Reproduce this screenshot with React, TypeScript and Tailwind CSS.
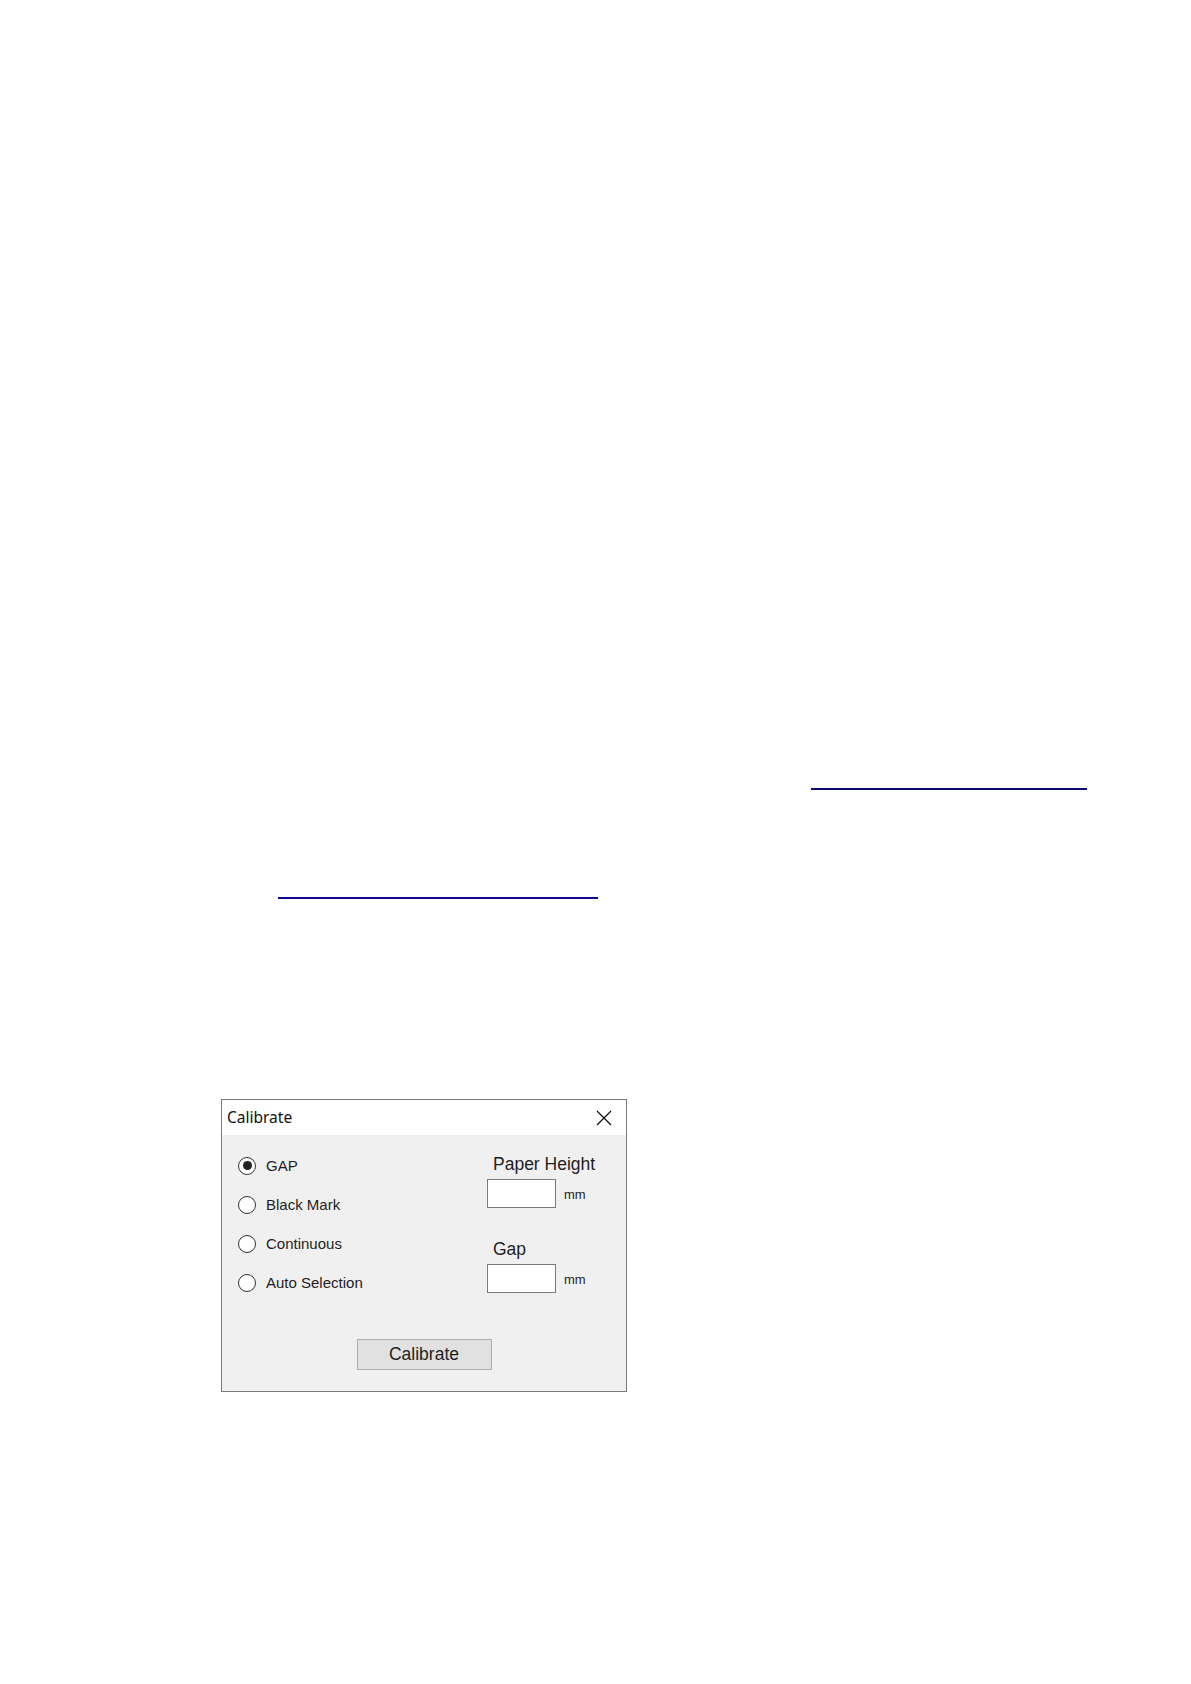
import React from 'react';

const radios = [
    { label: 'GAP', checked: true },
    { label: 'Black Mark', checked: false },
    { label: 'Continuous', checked: false },
    { label: 'Auto Selection', checked: false },
];

function Radio({ label, checked }: { label: string; checked: boolean }) {
    return (
        <div className="flex h-[39px] items-center gap-[10px]">
            <span className="flex h-[18px] w-[18px] items-center justify-center rounded-full border border-[#333333] bg-white">
                {checked && <span className="h-[9px] w-[9px] rounded-full bg-[#222222]" />}
            </span>
            <span className="text-[15px] leading-none text-[#1e1e1e]">{label}</span>
        </div>
    );
}

function Field({ label }: { label: string }) {
    return (
        <div className="flex flex-col">
            <span className="ml-[6px] text-[17.5px] leading-[22px] text-[#1e1e1e]">{label}</span>
            <div className="mt-[4px] flex items-center gap-[8px]">
                <div className="h-[29px] w-[69px] border border-[#7a7a7a] bg-white" />
                <span className="mt-[3px] text-[13px] text-[#1e1e1e]">mm</span>
            </div>
        </div>
    );
}

export default function App() {
    return (
        <div className="h-[1684px] w-[1191px] bg-white pt-[788px] font-['Liberation_Sans',Arial,sans-serif]">
            {/* link underlines, text not rendered in the scan */}
            <div className="ml-[811px] h-[2px] w-[276px] bg-[#0c0c6a]" />
            <div className="ml-[278px] mt-[107px] h-[2px] w-[320px] bg-[#0c0c8a]" />

            {/* Calibrate dialog */}
            <div className="ml-[221px] mt-[200px] flex h-[293px] w-[406px] flex-col border border-[#7a7a7a] bg-[#f0f0f0]">
                <div className="flex h-[35px] items-center justify-between bg-white pl-[5px] pr-[14px]">
                    <span className="font-['Noto_Sans',sans-serif] text-[15.5px] text-[#111111]">Calibrate</span>
                    <svg width="16" height="16" viewBox="0 0 16 16" fill="none" stroke="#111111" strokeWidth="1.3">
                        <path d="M1 1 L15 15 M15 1 L1 15" />
                    </svg>
                </div>
                <div className="flex pt-[11px]">
                    <div className="flex w-[265px] flex-col pl-[16px]">
                        {radios.map((r) => (
                            <Radio key={r.label} label={r.label} checked={r.checked} />
                        ))}
                    </div>
                    <div className="flex flex-col gap-[30px] pt-[7px]">
                        <Field label="Paper Height" />
                        <Field label="Gap" />
                    </div>
                </div>
                <div className="mt-[37px] flex justify-center">
                    <button className="h-[31px] w-[135px] border border-[#adadad] bg-[#e1e1e1] text-[17.5px] text-[#1e1e1e]">
                        Calibrate
                    </button>
                </div>
            </div>
        </div>
    );
}
